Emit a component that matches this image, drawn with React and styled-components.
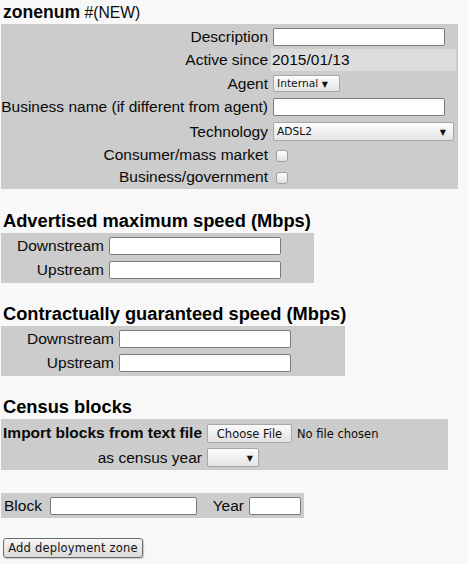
import React from 'react'
import styled, { createGlobalStyle } from 'styled-components'

const GlobalStyle = createGlobalStyle`
  html, body {
    margin: 0;
    padding: 0;
    background: #f8f8f8;
  }
  body {
    font-family: "Liberation Sans", Arial, sans-serif;
    font-size: 15.5px;
    color: #0a0a0a;
  }
`

const Page = styled.form`
  padding: 0 0 0 1px;
  min-height: 564px;
  box-sizing: border-box;
`

const Title = styled.div`
  margin: 2px 0 1px 2px;
  line-height: 20px;
  b {
    font-size: 17.6px;
  }
  span {
    font-size: 15.7px;
  }
`

const Heading = styled.h3`
  margin: ${p => p.$top}px 0 2px 2px;
  font-size: 18.3px;
  line-height: 21px;
  color: #000;
`

// one grey block of label/field cells, like a table with 2px cell spacing
const Panel = styled.div`
  display: grid;
  grid-template-columns: ${p => p.$cols};
  grid-template-rows: ${p => p.$rows || 'none'};
  grid-auto-rows: 22px;
  gap: 2px;
  padding: 2px;
  width: max-content;
  margin-top: ${p => p.$top || 0}px;
  background: #ccc;
`

const Label = styled.div`
  display: flex;
  align-items: center;
  justify-content: ${p => (p.$left ? 'flex-start' : 'flex-end')};
  padding: 0 1px;
  white-space: nowrap;
  font-weight: ${p => (p.$bold ? 'bold' : 'normal')};
`

const Value = styled.div`
  display: flex;
  align-items: center;
  padding: 0 1px;
  white-space: nowrap;
  background: ${p => (p.$shade ? '#ddd' : 'transparent')};
`

const TextInput = styled.input`
  box-sizing: border-box;
  width: ${p => p.$w}px;
  height: 18px;
  margin: 0 0 0 1px;
  padding: 0 2px;
  border: 1px solid #7a7a7a;
  border-radius: 2px;
  background: #fff;
  font: 13px "DejaVu Sans", sans-serif;
`

const SelectBox = styled.span`
  position: relative;
  display: inline-flex;
  margin-left: 1px;
  &::after {
    content: '▼';
    position: absolute;
    right: ${p => p.$arrow}px;
    top: 50%;
    transform: translateY(-50%);
    font: 8px "DejaVu Sans", sans-serif;
    color: #111;
    pointer-events: none;
  }
`

const Select = styled.select`
  appearance: none;
  box-sizing: border-box;
  width: ${p => p.$w}px;
  height: ${p => p.$h}px;
  margin: 0;
  padding: 0 0 0 3px;
  border: 1px solid #a6a6a6;
  border-radius: 2px;
  background: linear-gradient(#fdfdfd, #e4e4e4);
  font: 10.7px "DejaVu Sans", sans-serif;
  color: #111;
`

const Check = styled.input.attrs({ type: 'checkbox' })`
  appearance: none;
  box-sizing: border-box;
  width: 12px;
  height: 12px;
  margin: 2px 0 0 4px;
  border: 1px solid #a0a0a0;
  border-radius: 3px;
  background: linear-gradient(#ffffff, #e0e0e0);
`

const FileButton = styled.button`
  box-sizing: border-box;
  width: 85px;
  height: 19px;
  margin: 1px 0 0 1px;
  padding: 0;
  border: 1px solid #a9a9a9;
  border-radius: 2px;
  background: linear-gradient(#fafafa, #e2e2e2);
  font: 11.5px "DejaVu Sans", sans-serif;
  color: #111;
`

const FileNote = styled.span`
  margin: 1px 0 0 5px;
  font: 11.5px "DejaVu Sans", sans-serif;
`

const Actions = styled.div`
  margin: 20px 0 0 2px;
`

const SubmitButton = styled.button`
  box-sizing: border-box;
  width: 140px;
  height: 20px;
  padding: 0;
  border: 1px solid #6c6c6c;
  border-radius: 3px;
  background: linear-gradient(#f6f6f6, #dadada);
  box-shadow: 1px 1px 1px rgba(0, 0, 0, 0.2);
  font: 11.5px "DejaVu Sans", sans-serif;
  letter-spacing: 0.2px;
  color: #111;
`

export default function App() {
  return (
    <>
      <GlobalStyle />
      <Page onSubmit={e => e.preventDefault()}>
        <Title>
          <b>zonenum</b> <span>#(NEW)</span>
        </Title>

        <Panel $cols="266px 185px" $rows="21px 22px 21px 22px 23px 20px 20px">
          <Label>Description</Label>
          <Value><TextInput $w={172} /></Value>

          <Label>Active since</Label>
          <Value $shade>2015/01/13</Value>

          <Label>Agent</Label>
          <Value>
            <SelectBox $arrow={12}>
              <Select $w={67} $h={17} defaultValue="internal">
                <option value="internal">Internal</option>
              </Select>
            </SelectBox>
          </Value>

          <Label>Business name (if different from agent)</Label>
          <Value><TextInput $w={172} /></Value>

          <Label>Technology</Label>
          <Value>
            <SelectBox $arrow={8}>
              <Select $w={181} $h={19} defaultValue="adsl2">
                <option value="adsl2">ADSL2</option>
              </Select>
            </SelectBox>
          </Value>

          <Label>Consumer/mass market</Label>
          <Value><Check /></Value>

          <Label>Business/government</Label>
          <Value><Check /></Value>
        </Panel>

        <Heading $top={21}>Advertised maximum speed (Mbps)</Heading>
        <Panel $cols="102px 205px">
          <Label>Downstream</Label>
          <Value><TextInput $w={172} /></Value>
          <Label>Upstream</Label>
          <Value><TextInput $w={172} /></Value>
        </Panel>

        <Heading $top={20}>Contractually guaranteed speed (Mbps)</Heading>
        <Panel $cols="112px 226px">
          <Label>Downstream</Label>
          <Value><TextInput $w={172} /></Value>
          <Label>Upstream</Label>
          <Value><TextInput $w={172} /></Value>
        </Panel>

        <Heading $top={20}>Census blocks</Heading>
        <Panel $cols="200px 241px" $rows="24px 21px">
          <Label $bold>Import blocks from text file</Label>
          <Value>
            <FileButton type="button">Choose File</FileButton>
            <FileNote>No file chosen</FileNote>
          </Value>

          <Label>as census year</Label>
          <Value>
            <SelectBox $arrow={6}>
              <Select $w={52} $h={19} defaultValue="">
                <option value=""></option>
              </Select>
            </SelectBox>
          </Value>
        </Panel>

        <Panel $top={23} $cols="43px 151px 44px 55px" $rows="21px">
          <Label $left>Block</Label>
          <Value><TextInput $w={147} /></Value>
          <Label>Year</Label>
          <Value><TextInput $w={52} /></Value>
        </Panel>

        <Actions>
          <SubmitButton type="submit">Add deployment zone</SubmitButton>
        </Actions>
      </Page>
    </>
  )
}
